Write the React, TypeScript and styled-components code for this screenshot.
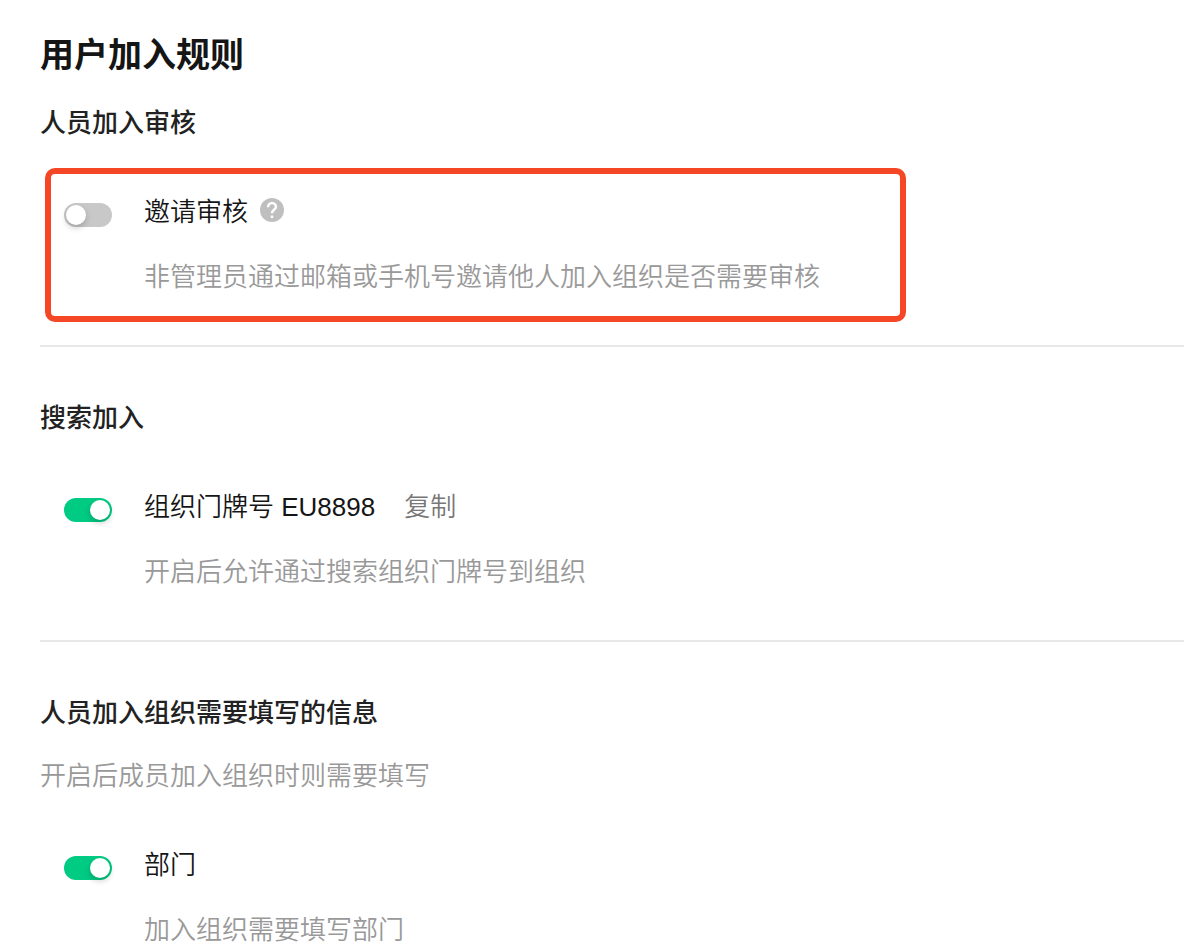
import React from "react";
import styled, { createGlobalStyle } from "styled-components";

const GlobalStyle = createGlobalStyle`
  * { box-sizing: border-box; }
  body {
    margin: 0;
    background: #fff;
    color: #151515;
    font-family: "Liberation Sans", "Noto Sans CJK SC", sans-serif;
    font-size: 26px;
    font-weight: 350;
    line-height: 40px;
  }
`;

const Page = styled.main`
  padding: 33px 0 0 40px;
`;

const Title = styled.h1`
  margin: 0 0 26px;
  font-size: 34px;
  line-height: 44px;
  font-weight: 600;
`;

const Section = styled.section`
  & + & {
    margin-top: 23px;
    border-top: 2px solid #e8e8e8;
    padding-top: 51px;
  }
`;

const SectionTitle = styled.h2`
  margin: 0;
  color: #222;
  font-size: 26px;
  line-height: 40px;
  font-weight: 500;
`;

const SectionNote = styled.p`
  margin: 23px 0 0;
  color: #999;
`;

const Setting = styled.div<{ $highlighted?: boolean }>`
  display: flex;
  gap: 32px;
  width: fit-content;
  padding: 18px 80px 19px 13px;
  margin: 25px 0 0 5px;
  border: 6px solid ${(p) => (p.$highlighted ? "#f54726" : "transparent")};
  border-radius: 10px;
`;

const Switch = styled.input`
  appearance: none;
  flex: none;
  display: flex;
  width: 48px;
  height: 24px;
  margin: 11px 0 0;
  padding: 2px;
  border-radius: 12px;
  background: #c8c8c8;
  cursor: pointer;

  &::before {
    content: "";
    width: 20px;
    height: 20px;
    border-radius: 50%;
    background: #fff;
    box-shadow: 0 3px 6px rgba(0, 0, 0, 0.2);
  }

  &:checked {
    justify-content: flex-end;
    background: #00cb82;
  }
`;

const LabelRow = styled.div`
  display: flex;
  align-items: center;
  height: 40px;
`;

const HelpButton = styled.button`
  display: flex;
  margin: 0 0 4px 12px;
  padding: 0;
  border: 0;
  background: none;
  cursor: pointer;
`;

const CopyButton = styled.button`
  margin: 0 0 0 29px;
  padding: 0;
  border: 0;
  background: none;
  color: #777;
  font: inherit;
  cursor: pointer;
`;

const Description = styled.p`
  margin: 25px 0 0;
  color: #999;
`;

const HelpIcon = () => (
  <svg width="24" height="24" viewBox="0 0 24 24" aria-hidden="true">
    <circle cx="12" cy="12" r="12" fill="#bfbfbf" />
    <path
      d="M8.1 9.2V8.8a3.9 3.9 0 0 1 7.8 0c0 2.9-3.9 3-3.9 6.4"
      fill="none"
      stroke="#fff"
      strokeWidth="2.5"
    />
    <rect x="10.7" y="17.4" width="2.6" height="2.6" rx="0.6" fill="#fff" />
  </svg>
);

type SettingItemProps = {
  id: string;
  label: string;
  description: string;
  on?: boolean;
  highlighted?: boolean;
  children?: React.ReactNode;
};

const SettingItem = ({ id, label, description, on, highlighted, children }: SettingItemProps) => (
  <Setting $highlighted={highlighted}>
    <Switch id={id} type="checkbox" role="switch" defaultChecked={on} aria-describedby={`${id}-desc`} />
    <div>
      <LabelRow>
        <label htmlFor={id}>{label}</label>
        {children}
      </LabelRow>
      <Description id={`${id}-desc`}>{description}</Description>
    </div>
  </Setting>
);

export default function App() {
  return (
    <>
      <GlobalStyle />
      <Page>
        <Title>用户加入规则</Title>
        <Section>
          <SectionTitle>人员加入审核</SectionTitle>
          <SettingItem
            id="invite"
            label="邀请审核"
            description="非管理员通过邮箱或手机号邀请他人加入组织是否需要审核"
            highlighted
          >
            <HelpButton type="button" aria-label="帮助">
              <HelpIcon />
            </HelpButton>
          </SettingItem>
        </Section>
        <Section>
          <SectionTitle>搜索加入</SectionTitle>
          <SettingItem id="search" label="组织门牌号 EU8898" description="开启后允许通过搜索组织门牌号到组织" on>
            <CopyButton type="button">复制</CopyButton>
          </SettingItem>
        </Section>
        <Section>
          <SectionTitle>人员加入组织需要填写的信息</SectionTitle>
          <SectionNote>开启后成员加入组织时则需要填写</SectionNote>
          <SettingItem id="department" label="部门" description="加入组织需要填写部门" on />
        </Section>
      </Page>
    </>
  );
}
